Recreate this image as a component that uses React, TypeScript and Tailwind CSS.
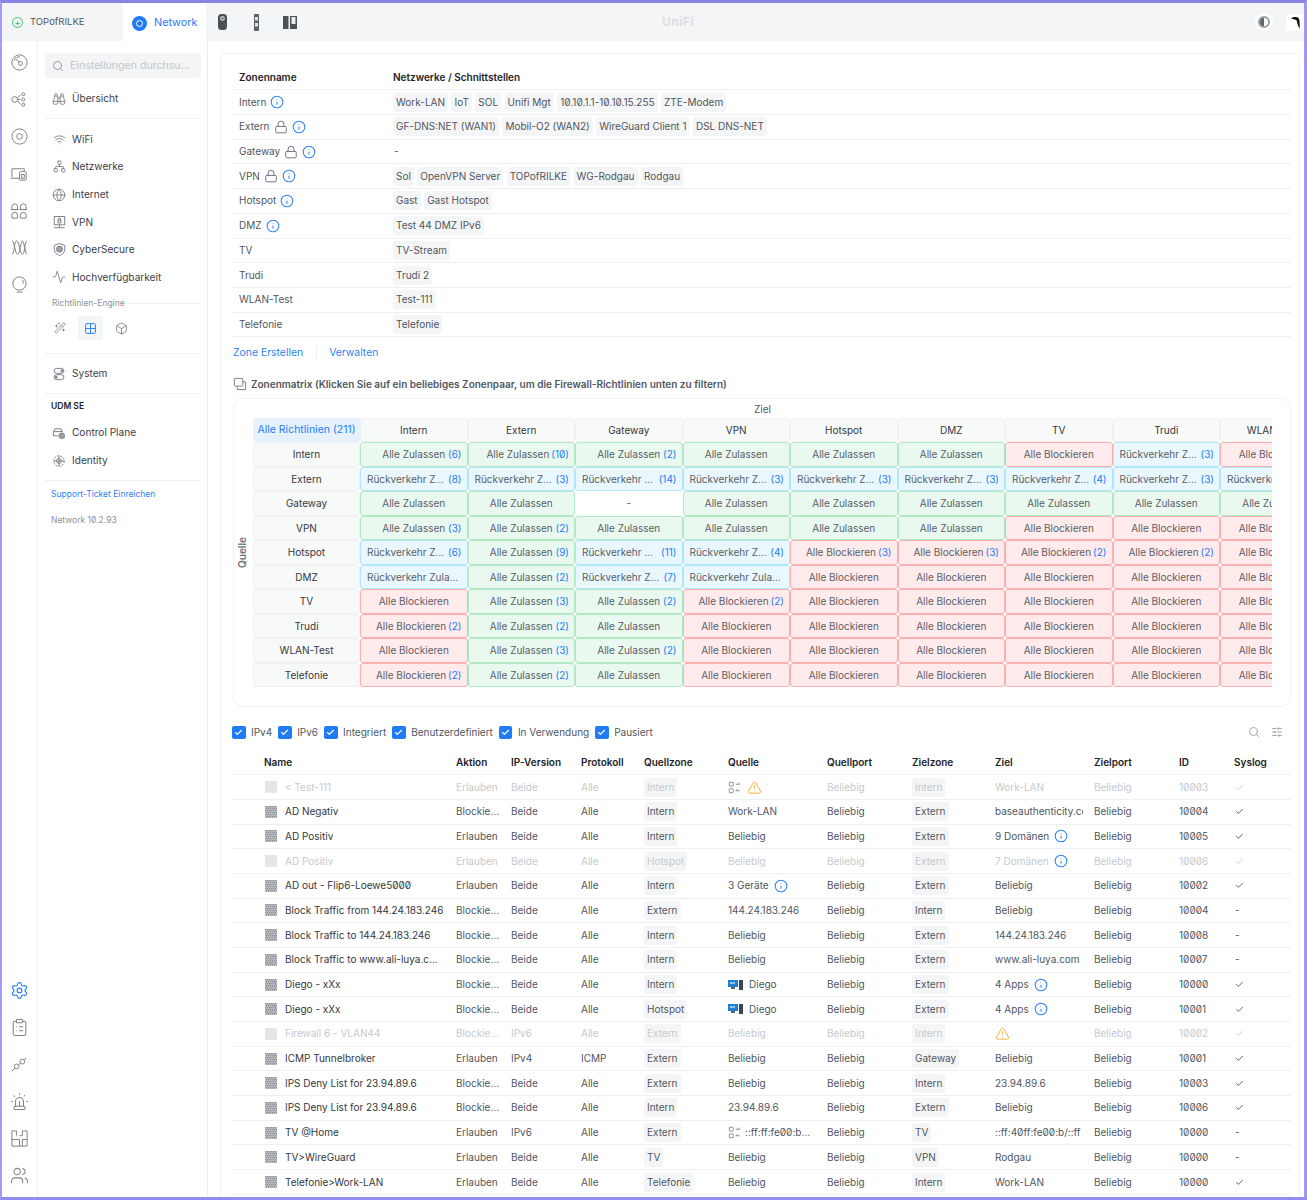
import {
  Activity, Binoculars, Box, Check, ClipboardList, Globe, Grid2x2, Info, Lock, Network, Search,
  Settings, Siren, SlidersHorizontal, TriangleAlert, Users, WandSparkles, Wifi,
} from "lucide-react";
import type { ReactNode } from "react";

const ICON = "#7e848b";

function Svg({ children, size = 19, color = ICON }: { children: ReactNode; size?: number; color?: string }) {
  return (
    <svg width={size} height={size} viewBox="0 0 20 20" fill="none" stroke={color} strokeWidth={20 / size} className="shrink-0">
      {children}
    </svg>
  );
}

function InfoIcon() {
  return <Info size={14} strokeWidth={1.8} className="shrink-0 text-[#2f82f6]" />;
}

function LockIcon() {
  return <Lock size={14} strokeWidth={1.7} className="shrink-0 text-[#6f757c]" />;
}

function ConvertIcon() {
  return (
    <Svg size={13} color="#8a9096">
      <rect x="2" y="2" width="6" height="6" rx="1" />
      <path d="M12 5h6M15.5 2.5 18 5M18 15h-6M14.5 12.5 12 15" />
      <rect x="2" y="12" width="6" height="6" rx="1" />
    </Svg>
  );
}

function DeviceIcon() {
  return (
    <svg width="16" height="12" viewBox="0 0 16 12" className="shrink-0">
      <rect x="0" y="1" width="10" height="7" fill="#1f7fd6" />
      <rect x="2" y="3" width="5" height="2" fill="#8cc6f2" />
      <rect x="3" y="8" width="4" height="2" fill="#58646e" />
      <rect x="11" y="1" width="4" height="10" fill="#3c4650" />
    </svg>
  );
}

function RuleIcon({ off }: { off?: boolean }) {
  const cells = [];
  for (let y = 0; y < 6; y++) {
    for (let x = 0; x < 6; x++) {
      cells.push(<rect key={`${x}-${y}`} x={x * 2 + 0.3 + (y % 2) * 0.5} y={y * 2 + 0.3} width="1" height="1" fill="#5f656b" />);
    }
  }
  return (
    <svg width="12" height="12" viewBox="0 0 12 12" className={`shrink-0 ${off ? "opacity-30" : ""}`}>
      <rect width="12" height="12" rx="1" fill="#c2c5c9" />
      {cells}
    </svg>
  );
}

const railTop = [
  <Svg key="a"><circle cx="10" cy="10" r="8" /><circle cx="11" cy="11" r="2" /><path d="M9.5 9.5 6.5 6.5M4.5 8a6 6 0 0 1 6-4" /></Svg>,
  <Svg key="b"><circle cx="5" cy="10" r="3" /><path d="M8 10h3M8 8.5 11 5M8 11.5l3 3.5" /><circle cx="14" cy="4.5" r="1.6" /><circle cx="14" cy="10" r="1.6" /><circle cx="14" cy="15.5" r="1.6" /></Svg>,
  <Svg key="c"><circle cx="10" cy="10" r="8" /><circle cx="10" cy="10" r="3" /></Svg>,
  <Svg key="d"><path d="M2 14V5h13v2M1 15h9" /><rect x="10" y="8" width="7" height="9" rx="1" /><rect x="12" y="11" width="3" height="4" /></Svg>,
  <Svg key="e"><path d="M2 9V6a3 3 0 0 1 6 0v3zM11 9V6a3 3 0 0 1 6 0v3zM2 18v-3a3 3 0 0 1 6 0v3zM11 18v-3a3 3 0 0 1 6 0v3z" /><path d="M1 9h8M10 9h8" /></Svg>,
  <Svg key="f"><path d="M2 17C5 17 4 3 7 3s3 14 6 14 2-14 5-14M2 3c3 0 3 14 6 14s3-14 5-14 3 14 5 14" /></Svg>,
  <Svg key="g"><circle cx="10" cy="9" r="7" /><path d="M7 18h6M13 5a5 5 0 0 1 1 4" /></Svg>,
];

const railBottom = [
  <Settings key="a" size={19} strokeWidth={1.5} className="text-[#2f82f6]" />,
  <ClipboardList key="b" size={19} strokeWidth={1.3} className="text-[#7e848b]" />,
  <Svg key="c"><circle cx="13" cy="7" r="2.5" /><circle cx="7" cy="12" r="2.5" /><path d="M15 5l2-2M5 14l-3 3M9 10l2-1" /></Svg>,
  <Siren key="d" size={19} strokeWidth={1.3} className="text-[#7e848b]" />,
  <Svg key="e"><path d="M2 2h5v5M13 2h5v16H2V2M2 11h8v7M13 2v5h-3M13 11h5M13 11v7" /></Svg>,
  <Users key="f" size={19} strokeWidth={1.3} className="text-[#7e848b]" />,
];

function Rail() {
  return (
    <div className="flex w-[36px] shrink-0 flex-col items-center justify-between border-r border-[#f0f1f2] pt-[12px] pr-[1px] pb-[12px]">
      <div className="flex flex-col items-center gap-[18px]">{railTop}</div>
      <div className="flex flex-col items-center gap-[18px]">{railBottom}</div>
    </div>
  );
}

function NavItem({ icon, label, h = "h-[27.6px]" }: { icon: ReactNode; label: string; h?: string }) {
  return (
    <div className={`flex ${h} items-center text-[10.1px] text-[#3b4047]`}>
      <div className="flex w-[27px] justify-center pl-[1px]">{icon}</div>
      {label}
    </div>
  );
}

function Divider() {
  return <div className="h-px bg-[#eeeff1]" />;
}

function SideNav() {
  const i = "text-[#7e848b]";
  return (
    <div className="flex w-[170px] shrink-0 flex-col border-r border-[#ececee] pt-[12px] pr-[6px] pl-[7px]">
      <div className="flex h-[25px] items-center gap-[6px] rounded-[3px] bg-[#f4f5f6] px-[7px] text-[10.6px] text-[#c2c6ca]">
        <Search size={12} strokeWidth={1.8} className="shrink-0 text-[#8c9198]" />
        <span className="truncate">Einstellungen durchsuch...</span>
      </div>
      <div className="mt-[7px] pb-[5px]">
        <NavItem icon={<Binoculars size={14} strokeWidth={1.6} className={i} />} label="Übersicht" />
      </div>
      <Divider />
      <div className="mt-[7px]">
        <NavItem icon={<Wifi size={13} strokeWidth={1.7} className={i} />} label="WiFi" />
        <NavItem icon={<Network size={13} strokeWidth={1.7} className={i} />} label="Netzwerke" />
        <NavItem icon={<Globe size={14} strokeWidth={1.6} className={i} />} label="Internet" />
        <NavItem
          icon={<Svg size={15}><rect x="3" y="2" width="14" height="11" /><rect x="8" y="7" width="4" height="3.5" /><path d="M8.5 7V5.5a1.5 1.5 0 0 1 3 0V7M10 13v4M3 17h14" /></Svg>}
          label="VPN"
        />
        <NavItem
          icon={<Svg size={15}><path d="M10 2 3 4.5V10c0 4 3 6.5 7 8 4-1.5 7-4 7-8V4.5z" /><circle cx="10" cy="9.5" r="4" fill="#9da2a8" /></Svg>}
          label="CyberSecure"
        />
        <NavItem icon={<Activity size={14} strokeWidth={1.6} className={i} />} label="Hochverfügbarkeit" />
      </div>
      <div className="mt-[5px] flex h-[14px] items-center gap-[3px] pl-[7px] text-[8.5px] text-[#8d9298]">
        Richtlinien-Engine
        <div className="h-px flex-1 bg-[#eeeff1]" />
      </div>
      <div className="mt-[6px] flex h-[24px] items-center gap-[6px] pl-[2px]">
        <div className="flex w-[25px] justify-center"><WandSparkles size={12} strokeWidth={1.7} className={i} /></div>
        <div className="flex h-[24px] w-[25px] items-center justify-center rounded-[3px] bg-[#f4f5f6]">
          <Grid2x2 size={13} strokeWidth={1.8} className="text-[#2f82f6]" />
        </div>
        <div className="flex w-[25px] justify-center"><Box size={13} strokeWidth={1.6} className={i} /></div>
      </div>
      <div className="mt-[13px]"><Divider /></div>
      <div className="my-[5px]">
        <NavItem
          icon={<Svg size={14}><rect x="3" y="2" width="14" height="7" rx="3.5" /><rect x="3" y="11" width="14" height="7" rx="3.5" /><circle cx="14" cy="5.5" r="1.5" fill="#9da2a8" /><circle cx="6" cy="14.5" r="1.5" fill="#9da2a8" /></Svg>}
          label="System"
          h="h-[29px]"
        />
      </div>
      <Divider />
      <div className="mt-[6px] flex h-[13px] items-center pl-[6px] text-[8.5px] font-semibold text-[#212327]">UDM SE</div>
      <div className="mt-[6px]">
        <NavItem
          icon={<Svg size={14}><path d="M2 14V8l2-4h9l2 4H2M2 14h7" /><circle cx="14" cy="14" r="4" fill="#9da2a8" /></Svg>}
          label="Control Plane"
        />
        <NavItem
          icon={<Svg size={14}><circle cx="10" cy="10" r="7.5" strokeDasharray="3 1.5" /><circle cx="10" cy="10" r="3.5" /><path d="M3 10h14M10 3v14" /></Svg>}
          label="Identity"
        />
      </div>
      <div className="mt-[6px]"><Divider /></div>
      <div className="mt-[7px] flex h-[13px] items-center pl-[6px] text-[8.5px] text-[#2f82f6]">Support-Ticket Einreichen</div>
      <div className="mt-[13px] flex h-[13px] items-center pl-[6px] text-[8.5px] text-[#8d9298]">Network 10.2.93</div>
    </div>
  );
}

function TopBar() {
  return (
    <div className="relative flex h-[38px] shrink-0 items-center bg-[#f4f5f6]">
      <div className="flex h-full w-[121px] items-center gap-[7px] pt-[1px] pl-[10px] text-[9.5px] text-[#50565e]">
        <div className="flex h-[11px] w-[11px] items-center justify-center rounded-full border border-[#43c978] text-[9px] leading-none text-[#2fb865]">+</div>
        TOPofRILKE
      </div>
      <div className="flex h-full w-[83px] items-center gap-[7px] bg-white pt-[2px] pl-[9px] text-[10.8px] text-[#1f7cf6]">
        <div className="flex h-[15px] w-[15px] items-center justify-center rounded-full bg-[#1f7cf6]">
          <div className="h-[7px] w-[7px] rounded-full border-[1.5px] border-white" />
        </div>
        Network
      </div>
      <div className="ml-[10px] flex items-center gap-[20.5px]">
        <svg width="13" height="17" viewBox="0 0 13 17"><rect x="2" y="0" width="9" height="16" rx="3.5" fill="#4b5157" /><circle cx="6.5" cy="4.5" r="2.4" fill="#c9ccd0" /><circle cx="6.5" cy="4.5" r="1" fill="#4b5157" /></svg>
        <svg width="13" height="17" viewBox="0 0 13 17"><rect x="4" y="0" width="5" height="17" rx="1" fill="#5b6167" /><rect x="5" y="3" width="3" height="3.5" fill="#dfe1e3" /><rect x="5" y="9" width="3" height="3.5" fill="#dfe1e3" /></svg>
        <svg width="14" height="15" viewBox="0 0 14 15"><rect x="0" y="1" width="5.5" height="13" fill="#4b5157" /><rect x="7" y="1" width="7" height="13" fill="#4b5157" /><rect x="8.5" y="2" width="4" height="7" fill="#eceef0" /></svg>
      </div>
      <div className="absolute left-[660px] top-1/2 -translate-y-1/2 text-[12px] font-bold tracking-[0.5px] text-[#dcdfe2]">UniFi</div>
      <div className="ml-auto flex h-full items-center gap-[13px]">
        <div className="flex h-[18px] w-[18px] items-center justify-center rounded-full bg-white">
          <div className="h-[12px] w-[12px] rounded-full border-2 border-[#9aa0a7] bg-[linear-gradient(90deg,#5f666e_50%,#ffffff_50%)]" />
        </div>
        <div className="flex h-[17px] w-[18px] items-center justify-center rounded-l-[3px] bg-white">
          <svg width="11" height="13" viewBox="0 0 11 13"><path d="M1 2.5C3 .5 7 .5 8.5 2c1.5 2 1 7 1.5 10.5-1.5-1-2.8-4.5-3.3-8C5 3.5 3 3 1 2.5z" fill="#111" /></svg>
        </div>
      </div>
    </div>
  );
}

const zones: { name: string; lock?: boolean; info?: boolean; nets: string[] }[] = [
  { name: "Intern", info: true, nets: ["Work-LAN", "IoT", "SOL", "Unifi Mgt", "10.10.1.1-10.10.15.255", "ZTE-Modem"] },
  { name: "Extern", lock: true, info: true, nets: ["GF-DNS:NET (WAN1)", "Mobil-O2 (WAN2)", "WireGuard Client 1", "DSL DNS-NET"] },
  { name: "Gateway", lock: true, info: true, nets: [] },
  { name: "VPN", lock: true, info: true, nets: ["Sol", "OpenVPN Server", "TOPofRILKE", "WG-Rodgau", "Rodgau"] },
  { name: "Hotspot", info: true, nets: ["Gast", "Gast Hotspot"] },
  { name: "DMZ", info: true, nets: ["Test 44 DMZ IPv6"] },
  { name: "TV", nets: ["TV-Stream"] },
  { name: "Trudi", nets: ["Trudi 2"] },
  { name: "WLAN-Test", nets: ["Test-111"] },
  { name: "Telefonie", nets: ["Telefonie"] },
];

function ZoneTable() {
  return (
    <div className="text-[10px]">
      <div className="flex h-[25.4px] items-center border-b border-[#eeeff1] font-semibold text-[#212327]">
        <div className="w-[160px] pl-[6px]">Zonenname</div>
        <div>Netzwerke / Schnittstellen</div>
      </div>
      {zones.map((z) => (
        <div key={z.name} className="flex h-[24.7px] items-center border-b border-[#eeeff1] text-[#50565e]">
          <div className="flex w-[160px] items-center gap-[4px] pl-[6px]">
            {z.name}
            {z.lock && <LockIcon />}
            {z.info && <InfoIcon />}
          </div>
          <div className="flex items-center gap-[3.5px]">
            {z.nets.length === 0 && <span className="pl-[1px]">-</span>}
            {z.nets.map((n) => (
              <span key={n} className="flex h-[19px] items-center rounded-[3px] bg-[#f4f5f6] px-[3px]">{n}</span>
            ))}
          </div>
        </div>
      ))}
    </div>
  );
}

type Cell = [kind: "Z" | "B" | "R" | "S" | "-", count?: number];

const Z = (n?: number): Cell => ["Z", n];
const B = (n?: number): Cell => ["B", n];
const R = (n?: number): Cell => ["R", n];
const S = (n?: number): Cell => ["S", n];
const NONE: Cell = ["-"];

const matrixHead = ["Intern", "Extern", "Gateway", "VPN", "Hotspot", "DMZ", "TV", "Trudi", "WLAN-Test"];
const matrix: { name: string; cells: Cell[] }[] = [
  { name: "Intern", cells: [Z(6), Z(10), Z(2), Z(), Z(), Z(), B(), R(3), B()] },
  { name: "Extern", cells: [R(8), R(3), R(14), R(3), R(3), R(3), R(4), R(3), R(3)] },
  { name: "Gateway", cells: [Z(), Z(), NONE, Z(), Z(), Z(), Z(), Z(), Z()] },
  { name: "VPN", cells: [Z(3), Z(2), Z(), Z(), Z(), Z(), B(), B(), B()] },
  { name: "Hotspot", cells: [R(6), Z(9), R(11), R(4), B(3), B(3), B(2), B(2), B()] },
  { name: "DMZ", cells: [S(), Z(2), R(7), S(), B(), B(), B(), B(), B()] },
  { name: "TV", cells: [B(), Z(3), Z(2), B(2), B(), B(), B(), B(), B()] },
  { name: "Trudi", cells: [B(2), Z(2), Z(), B(), B(), B(), B(), B(), B()] },
  { name: "WLAN-Test", cells: [B(), Z(3), Z(2), B(), B(), B(), B(), B(), B()] },
  { name: "Telefonie", cells: [B(2), Z(2), Z(), B(), B(), B(), B(), B(), B()] },
];

const headCell = "flex items-center justify-center rounded-[3px] border border-[#f0f1f2] bg-[#f8f9f9] text-[#33383e]";

function MatrixCell({ cell }: { cell: Cell }) {
  const [kind, count] = cell;
  if (kind === "-") {
    return <div className="flex items-center justify-center text-[#50565e]">-</div>;
  }
  if (kind === "R" || kind === "S") {
    return (
      <div className="flex min-w-0 items-center justify-between gap-[3px] rounded-[3px] border border-[#b4e6fa] bg-[#e9f7fe] px-[6px] pr-[5px] text-[#5a6067]">
        <span className="min-w-0 truncate">Rückverkehr Zulassen</span>
        {count !== undefined && <span className="shrink-0 text-[#1f7cf6]">({count})</span>}
      </div>
    );
  }
  const color = kind === "Z" ? "border-[#b2e8c4] bg-[#eaf9f0]" : "border-[#fbb0b0] bg-[#ffebeb]";
  return (
    <div className={`grid grid-cols-[1fr_auto_1fr] items-center rounded-[3px] border px-[5px] text-[#5a6067] ${color}`}>
      <span />
      <span className="whitespace-nowrap">{kind === "Z" ? "Alle Zulassen" : "Alle Blockieren"}</span>
      <span className="pl-[2px] text-right whitespace-nowrap text-[#1f7cf6]">{count !== undefined ? `(${count})` : ""}</span>
    </div>
  );
}

function Matrix() {
  return (
    <div className="flex h-[309px] rounded-[10px] border border-[#f0f1f2] text-[10px]">
      <div className="flex w-[19px] shrink-0 items-center justify-center pr-[3px]">
        <span className="rotate-180 font-semibold text-[#6b7178] [writing-mode:vertical-rl]">Quelle</span>
      </div>
      <div className="w-[1019px] overflow-hidden">
        <div className="flex h-[19px] items-center justify-center pt-[2px] text-[#50565e]">Ziel</div>
        <div className="grid w-[1075px] grid-cols-[107px_repeat(9,107.5px)] grid-rows-[repeat(11,24.5px)]">
          <div className="flex items-center justify-center rounded-[3px] bg-[#e6f1fe] text-[10.5px] text-[#1f7cf6]">Alle Richtlinien (211)</div>
          {matrixHead.map((h) => <div key={h} className={headCell}>{h}</div>)}
          {matrix.flatMap((row) => [
            <div key={row.name} className={headCell}>{row.name}</div>,
            ...row.cells.map((c, i) => <MatrixCell key={`${row.name}-${i}`} cell={c} />),
          ])}
        </div>
      </div>
    </div>
  );
}

const filters = ["IPv4", "IPv6", "Integriert", "Benutzerdefiniert", "In Verwendung", "Pausiert"];

function Filters() {
  return (
    <div className="flex h-[22px] items-center text-[10px] text-[#50565e]">
      <div className="flex items-center gap-[6px]">
        {filters.map((f) => (
          <div key={f} className="flex items-center gap-[5.5px]">
            <div className="flex h-[13.5px] w-[13.5px] items-center justify-center rounded-[2px] bg-[#1f7cf6]">
              <Check size={9} strokeWidth={3} className="text-white" />
            </div>
            {f}
          </div>
        ))}
      </div>
      <div className="ml-auto flex items-center gap-[11px] pr-[8px] text-[#8d9298]">
        <Search size={12} strokeWidth={1.6} />
        <SlidersHorizontal size={12} strokeWidth={1.6} />
      </div>
    </div>
  );
}

type Rule = {
  name: string; action?: string; ip?: string; proto?: string; from: string; src: ReactNode; to: string;
  dst: ReactNode; id: string; log: boolean; off?: boolean;
};

const E = "Erlauben";
const X = "Blockieren";

function WithInfo({ text }: { text: string }) {
  return <span className="flex items-center gap-[5px]">{text}<InfoIcon /></span>;
}

function Diego() {
  return <span className="flex items-center gap-[5px]"><DeviceIcon />Diego</span>;
}

const warn = <TriangleAlert size={15} strokeWidth={1.6} className="text-[#f5b342]" />;

const rules: Rule[] = [
  { name: "< Test-111", from: "Intern", src: <span className="flex items-center gap-[6px]"><ConvertIcon />{warn}</span>, to: "Intern", dst: "Work-LAN", id: "10003", log: true, off: true },
  { name: "AD Negativ", action: X, from: "Intern", src: "Work-LAN", to: "Extern", dst: "baseauthenticity.com", id: "10004", log: true },
  { name: "AD Positiv", from: "Intern", src: "Beliebig", to: "Extern", dst: <WithInfo text="9 Domänen" />, id: "10005", log: true },
  { name: "AD Positiv", from: "Hotspot", src: "Beliebig", to: "Extern", dst: <WithInfo text="7 Domänen" />, id: "10006", log: true, off: true },
  { name: "AD out - Flip6-Loewe5000", from: "Intern", src: <WithInfo text="3 Geräte" />, to: "Extern", dst: "Beliebig", id: "10002", log: true },
  { name: "Block Traffic from 144.24.183.246", action: X, from: "Extern", src: "144.24.183.246", to: "Intern", dst: "Beliebig", id: "10004", log: false },
  { name: "Block Traffic to 144.24.183.246", action: X, from: "Intern", src: "Beliebig", to: "Extern", dst: "144.24.183.246", id: "10008", log: false },
  { name: "Block Traffic to www.ali-luya.c...", action: X, from: "Intern", src: "Beliebig", to: "Extern", dst: "www.ali-luya.com", id: "10007", log: false },
  { name: "Diego - xXx", action: X, from: "Intern", src: <Diego />, to: "Extern", dst: <WithInfo text="4 Apps" />, id: "10000", log: true },
  { name: "Diego - xXx", action: X, from: "Hotspot", src: <Diego />, to: "Extern", dst: <WithInfo text="4 Apps" />, id: "10001", log: true },
  { name: "Firewall 6 - VLAN44", action: X, ip: "IPv6", from: "Extern", src: "Beliebig", to: "Intern", dst: warn, id: "10002", log: true, off: true },
  { name: "ICMP Tunnelbroker", ip: "IPv4", proto: "ICMP", from: "Extern", src: "Beliebig", to: "Gateway", dst: "Beliebig", id: "10001", log: true },
  { name: "IPS Deny List for 23.94.89.6", action: X, from: "Extern", src: "Beliebig", to: "Intern", dst: "23.94.89.6", id: "10003", log: true },
  { name: "IPS Deny List for 23.94.89.6", action: X, from: "Intern", src: "23.94.89.6", to: "Extern", dst: "Beliebig", id: "10006", log: true },
  { name: "TV @Home", ip: "IPv6", from: "Extern", src: <span className="flex min-w-0 items-center gap-[4px]"><ConvertIcon /><span className="truncate">::ff:ff:fe00:b000/::ff</span></span>, to: "TV", dst: "::ff:40ff:fe00:b/::ff", id: "10000", log: false },
  { name: "TV>WireGuard", from: "TV", src: "Beliebig", to: "VPN", dst: "Rodgau", id: "10000", log: false },
  { name: "Telefonie>Work-LAN", from: "Telefonie", src: "Beliebig", to: "Intern", dst: "Work-LAN", id: "10000", log: true },
  { name: "Telefonie>WLAN-Test", from: "Telefonie", src: "Beliebig", to: "WLAN-Test", dst: "Test-111", id: "10000", log: true },
];

const cols = "grid grid-cols-[224px_55px_70px_63px_84px_99px_85px_83px_99px_85px_55px_56px] items-center";

function Chip({ text, off }: { text: string; off?: boolean }) {
  return (
    <span className={`flex h-[19px] w-fit items-center rounded-[3px] bg-[#f4f5f6] px-[3px] ${off ? "text-[#c6c9cd]" : ""}`}>{text}</span>
  );
}

function Rules() {
  return (
    <div className="text-[10px]">
      <div className={`${cols} h-[25px] border-b border-[#eeeff1] font-semibold text-[#212327]`}>
        <div className="pl-[32px]">Name</div>
        {["Aktion", "IP-Version", "Protokoll", "Quellzone", "Quelle", "Quellport", "Zielzone", "Ziel", "Zielport", "ID", "Syslog"].map((h) => (
          <div key={h}>{h}</div>
        ))}
      </div>
      {rules.map((r, i) => (
        <div key={i} className={`${cols} h-[24.7px] border-b border-[#eeeff1] ${r.off ? "text-[#c6c9cd]" : "text-[#50565e]"}`}>
          <div className={`flex min-w-0 items-center gap-[8px] pl-[33px] pr-[10px] ${r.off ? "" : "text-[#33383e]"}`}>
            <RuleIcon off={r.off} />
            <span className="truncate">{r.name}</span>
          </div>
          <div className="w-[46px] truncate">{r.action ?? E}</div>
          <div>{r.ip ?? "Beide"}</div>
          <div>{r.proto ?? "Alle"}</div>
          <Chip text={r.from} off={r.off} />
          <div className="w-[88px] overflow-hidden whitespace-nowrap">{r.src}</div>
          <div>Beliebig</div>
          <Chip text={r.to} off={r.off} />
          <div className="w-[88px] overflow-hidden whitespace-nowrap">{r.dst}</div>
          <div>Beliebig</div>
          <div>{r.id}</div>
          <div className="pl-[1px]">
            {r.log ? <Check size={9} strokeWidth={2.4} className={r.off ? "text-[#c6c9cd]" : "text-[#50565e]"} /> : "-"}
          </div>
        </div>
      ))}
    </div>
  );
}

export default function App() {
  return (
    <div className="flex h-[1200px] flex-col overflow-hidden border-t-[3px] border-r-[3px] border-b-[3px] border-l-[2px] border-t-[#8983e4] border-r-[#9d97f6] border-b-[#908cf2] border-l-[#a29cf8] bg-white text-[#50565e] slashed-zero [font-family:Inter,'Noto_Sans',sans-serif]">
      <TopBar />
      <div className="flex min-h-0 flex-1">
        <Rail />
        <SideNav />
        <div className="min-w-0 flex-1 overflow-hidden pt-[12px] pl-[12px] pr-[4px]">
          <div className="rounded-t-[6px] border border-[#f0f1f2] px-[12px] pt-[11px] pr-[8px]">
            <ZoneTable />
            <div className="flex h-[30.6px] items-center text-[10.4px] text-[#2f82f6]">
              <span className="pr-[13px]">Zone Erstellen</span>
              <span className="border-l border-[#eeeff1] pl-[12px]">Verwalten</span>
            </div>
            <div className="flex h-[30px] items-center gap-[4px] pt-[3px] text-[10px] font-semibold text-[#50565e]">
              <Svg size={14}>
                <rect x="2" y="2" width="12" height="11" rx="1" />
                <path d="M14 7h4v11H6v-5" />
              </Svg>
              Zonenmatrix (Klicken Sie auf ein beliebiges Zonenpaar, um die Firewall-Richtlinien unten zu filtern)
            </div>
            <Matrix />
            <div className="mt-[14.5px] -ml-[1px]"><Filters /></div>
            <div className="mt-[6.8px] -ml-[1px]"><Rules /></div>
          </div>
        </div>
      </div>
    </div>
  );
}
